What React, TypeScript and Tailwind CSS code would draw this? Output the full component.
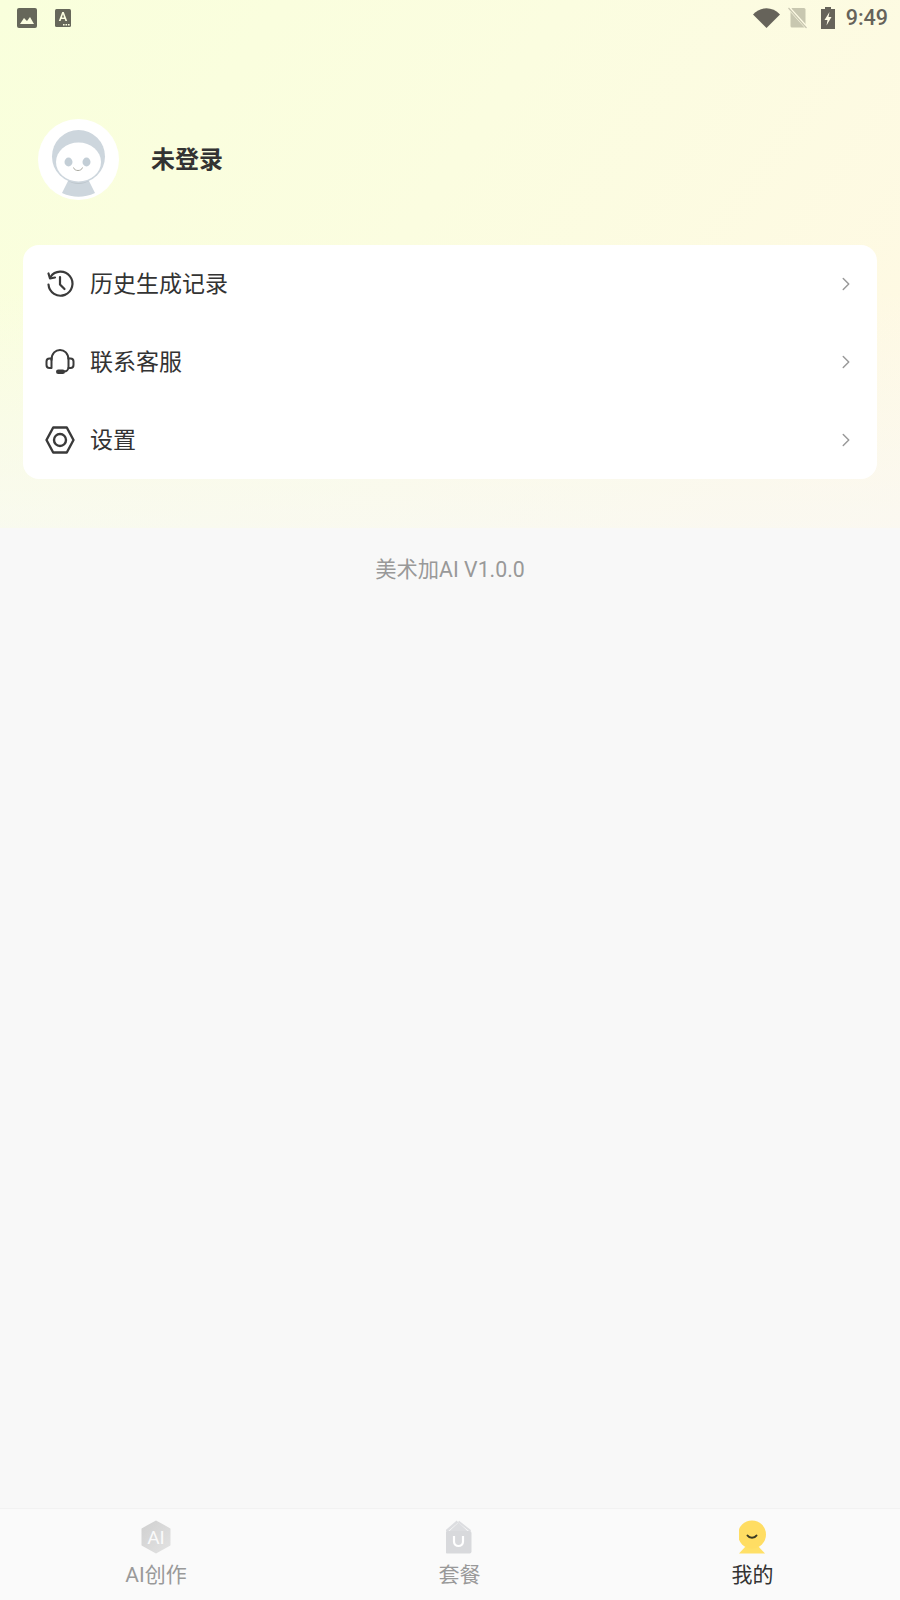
import { ChevronRight } from 'lucide-react';

const FONT = "font-['Roboto','Noto_Sans_CJK_SC',sans-serif]";

// Status bar icons
function ImageIcon() {
  return (
    <svg width="20" height="20" viewBox="0 0 20 20">
      <rect width="20" height="20" rx="2" fill="#66675a" />
      <path d="M3 16 L7 10 L10 13 L13 9 L17 16 Z" fill="#fbfde0" />
    </svg>
  );
}

function FontIcon() {
  return (
    <svg width="16" height="18" viewBox="0 0 16 18">
      <rect width="16" height="18" rx="1.5" fill="#66675a" />
      <path d="M3.8 12 L7.2 3 H8.8 L12.2 12 H10.4 L9.7 10 H6.3 L5.6 12 Z M6.9 8.4 H9.1 L8 5.2 Z" fill="#fbfde0" fillRule="evenodd" />
      <path d="M8 15 h1.6 v1.4 H8 Z M10.5 15 h1.6 v1.4 h-1.6 Z M13 15 h1.6 v1.4 H13 Z" fill="#fbfde0" />
    </svg>
  );
}

function WifiIcon() {
  return (
    <svg width="27" height="20" viewBox="0 0 27 20">
      <path d="M0 6.5 C7.5 -1.8 19.5 -1.8 27 6.5 L13.5 20 Z" fill="#66635a" />
    </svg>
  );
}

function NoSimIcon() {
  return (
    <svg width="20" height="22" viewBox="0 0 20 22">
      <path d="M4 1 H16 A1.5 1.5 0 0 1 17.5 2.5 V19 A1.5 1.5 0 0 1 16 20.5 H4 A1.5 1.5 0 0 1 2.5 19 V2.5 Z" fill="#c8c7b0" />
      <path d="M1 1 L19 21" stroke="#fffce6" strokeWidth="3" />
      <path d="M0.5 1 L18.5 21" stroke="#c8c7b0" strokeWidth="1.2" />
    </svg>
  );
}

function BatteryIcon() {
  return (
    <svg width="14" height="22" viewBox="0 0 14 22">
      <path d="M4 0 H10 V2 H14 V22 H0 V2 H4 Z" fill="#66635a" />
      <path d="M8.5 5 L3.5 13 H6.5 L5.5 18.5 L10.5 10 H7.5 Z" fill="#fffce6" />
    </svg>
  );
}

// Avatar drawing
function Avatar() {
  return (
    <svg width="81" height="81" viewBox="0 0 81 81">
      <circle cx="40.5" cy="40.5" r="40.5" fill="#ffffff" />
      <path d="M24 74 L31 60 H50 L57 74 C46 79 35 79 24 74 Z" fill="#cdd6dd" />
      <path d="M30 62 L31 60 H50 L51 62 C44 66 37 66 30 62 Z" fill="#bcc5cb" />
      <circle cx="40.5" cy="37.5" r="26.5" fill="#cdd6dd" />
      <ellipse cx="40.5" cy="43" rx="22.5" ry="19.5" fill="#ffffff" />
      <ellipse cx="30.5" cy="43" rx="4" ry="4.4" fill="#c3ced6" />
      <ellipse cx="48.5" cy="43" rx="4" ry="4.4" fill="#c3ced6" />
      <path d="M35.5 48.5 C36.5 52.5 43.5 52.5 44.5 48.5" fill="none" stroke="#a9a9a0" strokeWidth="1" />
    </svg>
  );
}

// Menu icons
function HistoryIcon() {
  return (
    <svg width="30" height="30" viewBox="0 0 30 30" fill="none" stroke="#3a3a3a" strokeWidth="2.2" strokeLinecap="round" strokeLinejoin="round">
      <path d="M5.5 8 A12 12 0 1 1 3.5 15.5" />
      <path d="M3.5 4.5 L5 9.5 L10 8.5" />
      <path d="M15 8 V15.5 L19.5 20" />
    </svg>
  );
}

function HeadsetIcon() {
  return (
    <svg width="30" height="30" viewBox="0 0 30 30" fill="none" stroke="#3a3a3a" strokeWidth="2" strokeLinecap="round" strokeLinejoin="round">
      <path d="M6.5 13 C6.5 -0.5 23.5 -0.5 23.5 13 V20 C23.5 22.5 21.5 24.5 19 24.5" />
      <path d="M6.5 11.5 V21 H4.5 C2.5 21 1.5 19.5 1.5 18 V14.5 C1.5 13 2.5 11.5 4.5 11.5 Z" />
      <path d="M23.5 11.5 H25.5 C27.5 11.5 28.5 13 28.5 14.5 V18 C28.5 19.5 27.5 21 25.5 21 H23.5" />
      <rect x="12" y="23.5" width="7" height="2.4" rx="1.2" fill="#3a3a3a" />
    </svg>
  );
}

function HexIcon() {
  return (
    <svg width="30" height="28" viewBox="0 0 30 28" fill="none" stroke="#3a3a3a" strokeWidth="2.4" strokeLinejoin="round">
      <path d="M8.2 1.5 H21.8 L28.5 14 L21.8 26.5 H8.2 L1.5 14 Z" />
      <circle cx="15" cy="14" r="6" />
    </svg>
  );
}

// Tab bar icons
function AiTabIcon() {
  return (
    <div className="relative flex h-[34px] w-[30px] items-center justify-center">
      <svg className="absolute inset-0" width="30" height="34" viewBox="0 0 30 34">
        <defs>
          <linearGradient id="aiFill" x1="0" y1="0" x2="1" y2="1">
            <stop offset="0" stopColor="#d0d0d0" />
            <stop offset="1" stopColor="#e2e2e2" />
          </linearGradient>
        </defs>
        <path d="M15 1.5 L28.5 9 V25 L15 32.5 L1.5 25 V9 Z" fill="url(#aiFill)" stroke="url(#aiFill)" strokeWidth="2" strokeLinejoin="round" />
      </svg>
      <span className="relative text-[19px] leading-none text-[#fafafa]">AI</span>
    </div>
  );
}

function PackageTabIcon() {
  return (
    <svg width="28" height="34" viewBox="1.5 0 28 34">
      <path d="M5 11 L14 2.5 L23 11 Z" fill="#dcdde0" />
      <path d="M2 11 L13 1.5" stroke="#dcdde0" strokeWidth="2.4" />
      <path d="M14 1.5 L26 11" stroke="#dcdde0" strokeWidth="2" />
      <rect x="1" y="11" width="26" height="22.5" rx="2" fill="#d8d9dc" />
      <path d="M9.5 16 V21.5 C9.5 27.5 18.5 27.5 18.5 21.5 V16" fill="none" stroke="#ffffff" strokeWidth="2.2" />
    </svg>
  );
}

function MineTabIcon() {
  return (
    <svg width="28" height="34" viewBox="1 0 28 34">
      <path d="M8 26 L1 33.5 H27 L20 26 Z" fill="#ffe067" />
      <circle cx="14" cy="14.5" r="14" fill="#ffdd63" />
      <path d="M9.5 15.5 C11.5 18.5 16.5 18.5 18.5 15.5" fill="none" stroke="#3b3a22" strokeWidth="2" strokeLinecap="round" />
    </svg>
  );
}

const menuItems = [
  { label: '历史生成记录', icon: <HistoryIcon /> },
  { label: '联系客服', icon: <HeadsetIcon /> },
  { label: '设置', icon: <HexIcon /> },
];

const tabs = [
  { label: 'AI创作', icon: <AiTabIcon />, active: false },
  { label: '套餐', icon: <PackageTabIcon />, active: false },
  { label: '我的', icon: <MineTabIcon />, active: true },
];

export default function App() {
  return (
    <div className={`flex h-[1600px] w-[900px] flex-col overflow-hidden bg-[#f8f8f8] ${FONT}`}>
      {/* Gradient header area */}
      <div className="h-[528px] shrink-0 bg-[linear-gradient(to_bottom,#f8f8f800_55%,#f8f8f8a0_100%),linear-gradient(125deg,#f9ffdc_0%,#fbfde0_45%,#fff8e4_100%)]">
        {/* Status bar */}
        <div className="flex h-[36px] items-center justify-between pl-[17px] pr-[12px]">
          <div className="flex items-center gap-[18px]">
            <ImageIcon />
            <FontIcon />
          </div>
          <div className="flex items-center">
            <WifiIcon />
            <div className="ml-[8px]"><NoSimIcon /></div>
            <div className="ml-[13px]"><BatteryIcon /></div>
            <span className="ml-[11px] text-[21.5px] font-medium text-[#66635a]">9:49</span>
          </div>
        </div>

        {/* Profile */}
        <div className="mt-[83px] flex items-center pl-[38px]">
          <Avatar />
          <span className="ml-[32px] text-[24px] font-bold text-[#333333]">未登录</span>
        </div>

        {/* Menu card */}
        <div className="mx-[23px] mt-[45px] rounded-[16px] bg-white">
          {menuItems.map((item) => (
            <div key={item.label} className="flex h-[78px] items-center pl-[22px] pr-[20px]">
              <div className="flex w-[45px] shrink-0 items-center">{item.icon}</div>
              <span className="flex-1 pt-[2px] text-[23px] text-[#333333]">{item.label}</span>
              <ChevronRight className="size-[22px] text-[#999999]" strokeWidth={1.6} />
            </div>
          ))}
        </div>
      </div>

      {/* Version */}
      <div className="mt-[27px] text-center text-[21.3px] leading-[30px] text-[#999999]">美术加AI V1.0.0</div>

      <div className="flex-1" />

      {/* Tab bar */}
      <div className="grid h-[92px] shrink-0 grid-cols-[304px_303px_283px] border-t border-[#f2f2f2] bg-[#fafafa] pl-[4px]">
        {tabs.map((tab) => (
          <div key={tab.label} className="flex flex-col items-center pt-[11px]">
            {tab.icon}
            <span className={`mt-[6px] text-[21px] leading-[30px] ${tab.active ? 'text-[#333333]' : 'text-[#999999]'}`}>
              {tab.label}
            </span>
          </div>
        ))}
      </div>
    </div>
  );
}
